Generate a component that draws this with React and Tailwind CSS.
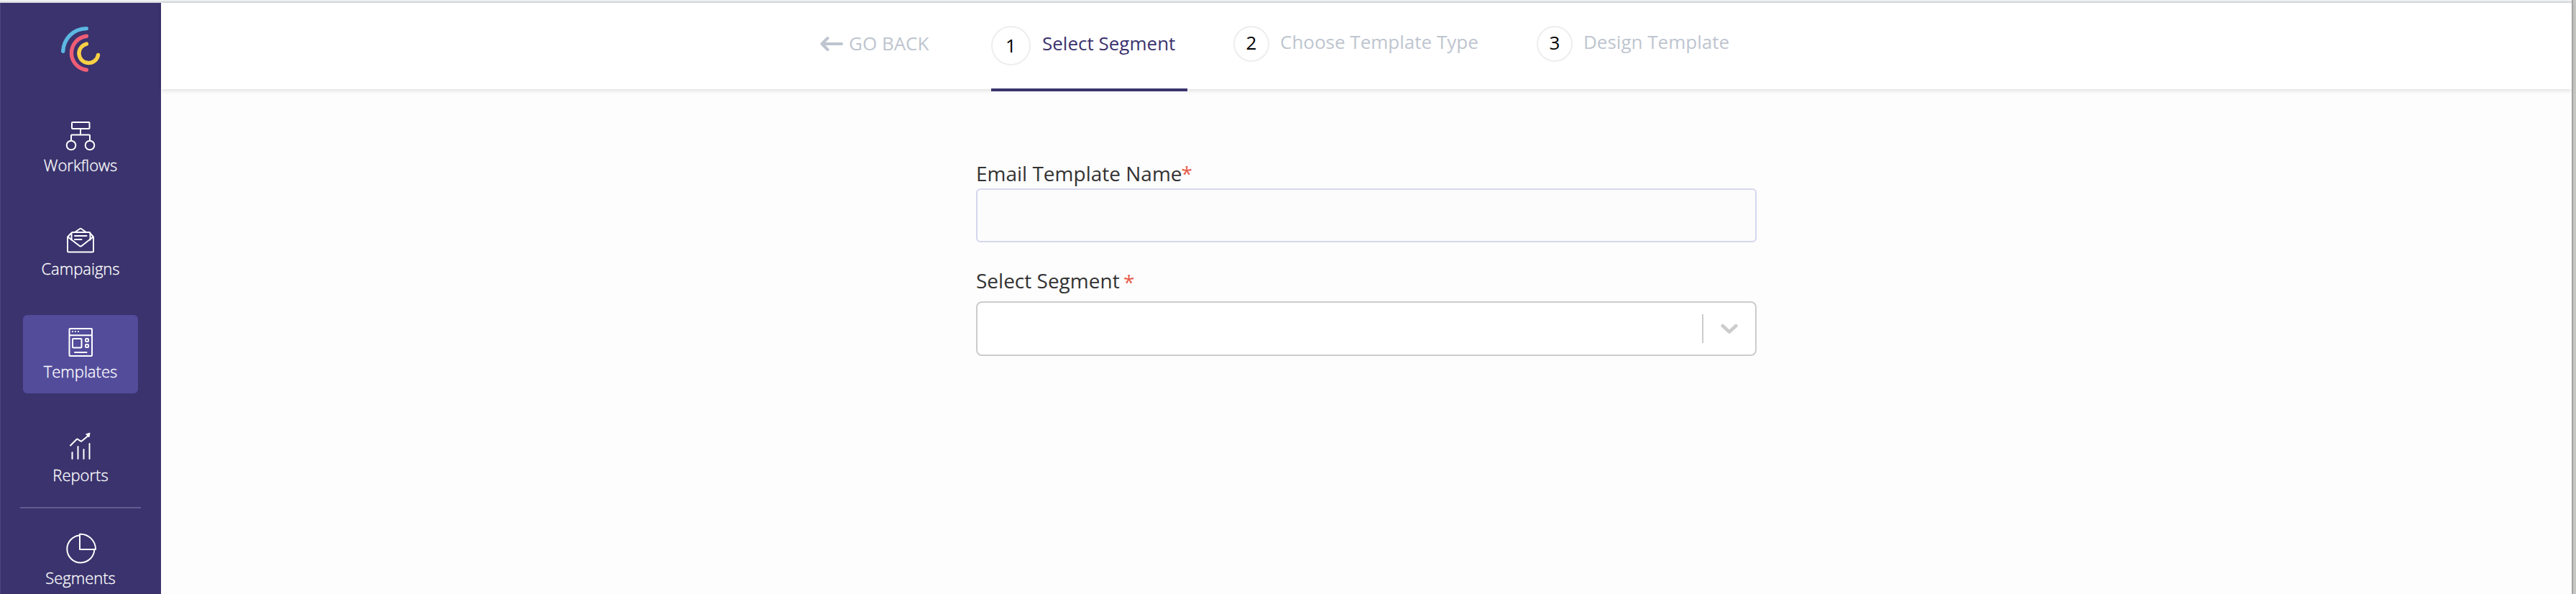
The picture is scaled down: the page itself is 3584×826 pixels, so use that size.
const ink = { fill: 'none', stroke: '#fff', strokeWidth: 2, strokeLinecap: 'round', strokeLinejoin: 'round' };

function WorkflowsIcon() {
  return (
    <svg className="h-11 w-11 shrink-0" viewBox="0 0 44 44" {...ink}>
      <rect x="10" y="3" width="24.5" height="9" rx="1" />
      <path d="M22 12v8.500M9 28v-6.500a1 1 0 0 1 1-1h24a1 1 0 0 1 1 1v6.500" />
      <circle cx="9" cy="35" r="6.300" />
      <circle cx="35" cy="35" r="6.300" />
    </svg>
  );
}

function CampaignsIcon() {
  return (
    <svg className="h-11 w-11 shrink-0" viewBox="0 0 44 44" {...ink}>
      <path d="M8.800 13.500 4.500 18a2 2 0 0 0-.5 1.500V38a1.500 1.500 0 0 0 1.500 1.500h33A1.500 1.500 0 0 0 40 38V19.500a2 2 0 0 0-.5-1.500L35.500 13.500" />
      <path d="M4.500 18.500 21 31.200a2 2 0 0 0 2.200 0L39.500 18.500" />
      <path d="M9.500 22.500V13.500a1.500 1.500 0 0 1 1.500-1.500h23a1.500 1.500 0 0 1 1.500 1.500v9" />
      <path d="m14 12 7-4.800a2 2 0 0 1 2.200 0L30 12" />
      <path d="M14 17h16.500M14 22h9.500" />
    </svg>
  );
}

function TemplatesIcon() {
  return (
    <svg className="h-11 w-11 shrink-0" viewBox="0 0 44 44" {...ink}>
      <rect x="6.500" y="3" width="31.500" height="38" rx="1" />
      <path d="M7 12.300h31" />
      <path d="M10.200 7h1.600M14.200 7h1.600M18.200 7h1.600" strokeLinecap="butt" />
      <rect x="11" y="17" width="12.500" height="12.500" rx="1" />
      <rect x="29" y="17" width="4" height="4" rx="1" />
      <rect x="29" y="25" width="4" height="4" rx="1" />
      <path d="M14 36h16.500" />
    </svg>
  );
}

function ReportsIcon() {
  return (
    <svg className="h-11 w-11 shrink-0" viewBox="0 0 44 44" {...ink}>
      <path d="M8 21.500 16.500 13a1.500 1.500 0 0 1 2 0l3.500 2.300a1.500 1.500 0 0 0 1.800 0L32 8.500" />
      <path d="M35 4.500 33.800 10 29.800 6z" fill="#fff" strokeWidth="1" />
      <path d="M10.500 31v9M18.500 23v17M26.500 27v13M34.500 19v21" />
    </svg>
  );
}

function SegmentsIcon() {
  return (
    <svg className="h-11 w-11 shrink-0" viewBox="0 0 44 44" {...ink}>
      <path d="M21 3.500A19 19 0 1 0 41.300 23" />
      <path d="M21 1.800V23h22A21 21 0 0 0 21 1.800z" />
    </svg>
  );
}

function Logo() {
  return (
    <svg className="h-16 w-14 shrink-0" viewBox="84 36 56 64" fill="none" strokeWidth="5.400" strokeLinecap="round">
      <path d="M87.700 71.200C88.500 54 101.500 40 120.300 39.600" stroke="#5cb7e2" />
      <path d="M120.400 50.300a23.600 23.600 0 0 0 0 46.900" stroke="#ee5d76" />
      <path d="M120.400 61.100A13.400 13.400 0 1 0 136.500 76.500" stroke="#fad144" />
    </svg>
  );
}

function NavItem({ icon, label, active }) {
  return (
    <a className={`flex h-[109px] w-40 shrink-0 flex-col items-center rounded-md pt-4 ${active ? 'bg-[#534c9b]' : ''}`}>
      {icon}
      <span className="mt-[3px] text-[22px] leading-[30px] font-light text-white [-webkit-text-stroke:0.3px_white]">{label}</span>
    </a>
  );
}

function Sidebar() {
  return (
    <aside className="flex h-[822px] w-56 shrink-0 flex-col items-center overflow-hidden border-l border-[#4b4679] bg-[#3a336d] pt-8 pr-px">
      <Logo />
      <nav className="mt-[51px] flex shrink-0 flex-col items-center">
        <div className="flex flex-col gap-[34.5px]">
          <NavItem icon={<WorkflowsIcon />} label="Workflows" />
          <NavItem icon={<CampaignsIcon />} label="Campaigns" />
          <NavItem icon={<TemplatesIcon />} label="Templates" active />
          <NavItem icon={<ReportsIcon />} label="Reports" />
        </div>
        <div className="mt-[14.5px] mb-[18px] h-0.5 w-42 bg-[#625b90]" />
        <NavItem icon={<SegmentsIcon />} label="Segments" />
      </nav>
    </aside>
  );
}

function Step({ number, label }) {
  return (
    <div className="flex h-[119px] w-[422px] items-start pt-8">
      <span className="flex h-[50px] w-[50px] justify-center rounded-full border-2 border-[#eeeeee] text-[26px] leading-[42px] text-black">
        {number}
      </span>
      <span className="ml-[15px] text-[26px] leading-[44px] text-[#bec5cf]">{label}</span>
    </div>
  );
}

function Header() {
  return (
    <header className="flex h-[120px] items-start bg-white pl-[917px] shadow-[0_2px_6px_rgba(0,0,0,0.12)]">
      <div className="flex w-[238px] items-center pt-[34px] text-[#bec5cf]">
        <svg className="mt-0.5 h-6 w-8" viewBox="0 0 32 24" fill="none" stroke="currentColor" strokeWidth="4" strokeLinecap="round" strokeLinejoin="round">
          <path d="M30 12H3M10.500 4 2.500 12l8 8" />
        </svg>
        <span className="ml-2 text-[26px] leading-[44px]">GO BACK</span>
      </div>
      <div className="flex h-[123px] w-[273px] items-start border-b-4 border-[#3a336d] pt-8">
        <span className="flex h-[55px] w-[55px] justify-center rounded-full border-2 border-[#eeeeee] text-[26px] leading-[50px] text-black">
          1
        </span>
        <span className="ml-4 pt-[2px] text-[26px] leading-[44px] text-[#3a336d]">Select Segment</span>
      </div>
      <div className="ml-16 flex">
        <Step number="2" label="Choose Template Type" />
        <Step number="3" label="Design Template" />
      </div>
    </header>
  );
}

function Form() {
  return (
    <form className="ml-[1134px] flex w-[1086px] flex-col pt-[98px] text-[28px] leading-[38px] text-[#333333]">
      <label htmlFor="name">
        Email Template Name<span className="-ml-px text-[#e85b4d]">*</span>
      </label>
      <input id="name" className="mt-[2px] h-[75px] rounded-md border-2 border-[#d6d6ef] bg-[#fcfcfd] px-4 outline-none" />
      <label className="mt-[34px]">
        Select Segment <span className="-ml-[2px] inline-block translate-y-[2px] text-[#e85b4d]">*</span>
      </label>
      <div className="mt-[10px] flex h-[76px] items-center justify-end rounded-lg border-2 border-[#cccccc] bg-white">
        <span className="h-10 w-0.5 bg-[#cccccc]" />
        <svg className="mx-6 h-4 w-6" viewBox="0 0 24 16" fill="none" stroke="#cccccc" strokeWidth="4.600" strokeLinecap="round" strokeLinejoin="round">
          <path d="m2.700 4 9.300 8.500L21.300 4" />
        </svg>
      </div>
    </form>
  );
}

export default function App() {
  return (
    <div className="flex h-[826px] w-[3584px] overflow-hidden bg-[#c6c6c4] font-['Open_Sans',sans-serif]">
      <div className="flex w-[3578px] flex-col bg-[#fdfdfd]">
        <div className="h-0.5 bg-[#f1f1f1]" />
        <div className="h-0.5 bg-[#d5dbe0]" />
        <div className="flex">
          <Sidebar />
          <main className="h-[822px] flex-1">
            <Header />
            <Form />
          </main>
        </div>
      </div>
      <div className="w-0.5 bg-[#a3a3a3]" />
    </div>
  );
}
